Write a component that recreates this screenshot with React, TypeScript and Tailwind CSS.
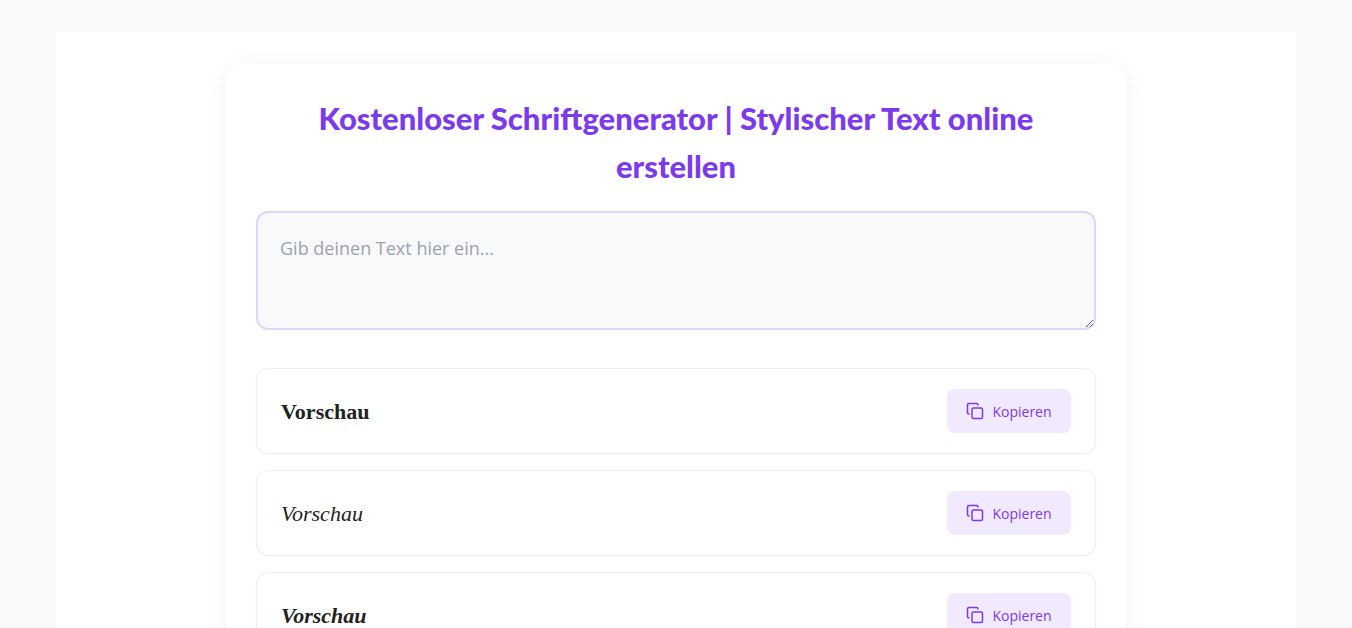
import React from "react";

const CopyIcon = () => (
  <svg width="18" height="18" viewBox="0 0 24 24" fill="none" stroke="currentColor" strokeWidth="2" strokeLinecap="round" strokeLinejoin="round">
    <rect x="8" y="8" width="14" height="14" rx="2" ry="2" />
    <path d="M4 16c-1.1 0-2-.9-2-2V4c0-1.1.9-2 2-2h10c1.1 0 2 .9 2 2" />
  </svg>
);

const rows = [
  "font-bold not-italic",
  "font-normal italic",
  "font-bold italic",
];

export default function App() {
  return (
    <div className="min-h-screen bg-[#f8f9fb] px-[56px] pt-[32px]" style={{ fontFamily: "'Open Sans', 'Noto Sans', sans-serif" }}>
      <div className="bg-white pt-[32px] flex justify-center min-h-[600px]">
        <div className="w-[900px] bg-white rounded-2xl shadow-[0_4px_24px_rgba(0,0,0,0.06)] px-[30px] pt-[30px] pb-8">
          <h1 className="mx-auto max-w-[810px] text-center text-[31px] leading-[48px] font-bold text-[#7c3aed]" style={{ fontFamily: "Lato, 'Noto Sans', sans-serif", fontWeight: 900 }}>
            Kostenloser Schriftgenerator | Stylischer Text online erstellen
          </h1>
          <textarea
            className="mt-[21px] block w-full h-[119px] rounded-xl border-2 border-[#ddd6fe] bg-[#f8f9fa] px-[22px] py-[22px] text-[18px] text-gray-700 placeholder:text-[#9ca3af] outline-none"
            placeholder="Gib deinen Text hier ein..."
          />
          <div className="mt-[38px] flex flex-col gap-[16px]">
            {rows.map((c, i) => (
              <div key={i} className="h-[86px] rounded-xl border border-[#eeeef0] bg-white flex items-center justify-between pl-[24px] pr-[24px] shadow-[0_1px_3px_rgba(0,0,0,0.03)]">
                <span className={`text-[22px] text-[#222] ${c}`} style={{ fontFamily: "'Liberation Serif', 'DejaVu Serif', serif" }}>Vorschau</span>
                <button className="w-[124px] h-[44px] rounded-lg bg-[#f1e9fd] text-[#7c3aed] text-[14px] font-medium flex items-center justify-center gap-2">
                  <CopyIcon />
                  Kopieren
                </button>
              </div>
            ))}
          </div>
        </div>
      </div>
    </div>
  );
}
